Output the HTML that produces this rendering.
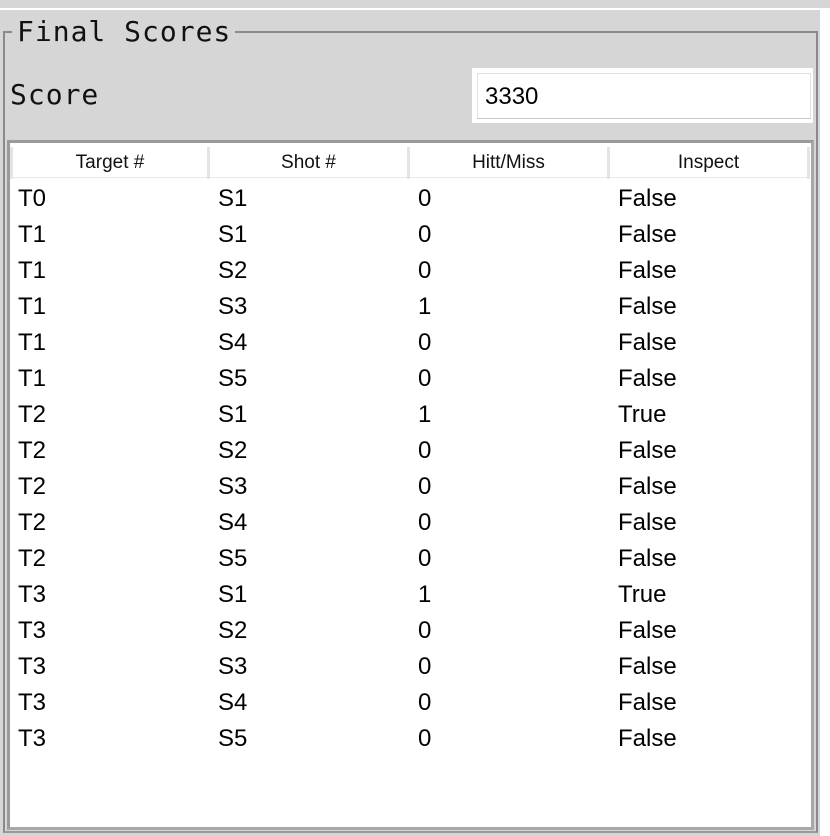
<!DOCTYPE html>
<html><head><style>
body{margin:0;width:830px;height:836px;background:#fff;position:relative;overflow:hidden;font-family:"Liberation Sans",sans-serif}
div{position:absolute;box-sizing:border-box}
.mono{font-family:"DejaVu Sans Mono","Liberation Mono",monospace;color:#111;letter-spacing:1px}
.h{top:147px;height:32px;width:200px;text-align:center;font-size:19px;line-height:32px;color:#111;border-right:3px solid #e4e4e4}
.r{font-size:24px;color:#000;line-height:36px;height:36px}
td{padding:0;height:36px}
</style></head><body>
<div style="left:0;top:0;width:830px;height:8px;background:#d6d6d6"></div>
<div style="left:0;top:10px;width:820px;height:826px;background:#d6d6d6"></div>
<div style="left:3px;top:31px;width:815px;height:802px;border:2px solid #8a8a8a;border-bottom-color:#9a9a9a"></div>
<div class="mono" style="left:12px;top:14px;padding:0 4px 0 5px;background:#d6d6d6;font-size:28px;line-height:36px">Final Scores</div>
<div class="mono" style="left:10px;top:77px;font-size:28px;line-height:36px">Score</div>
<div style="left:472px;top:68px;width:341px;height:55px;background:#fff"></div>
<div style="left:477px;top:73px;width:334px;height:46px;border:1px solid #e2e2e2;border-bottom-color:#c8c8c8;font-size:24px;line-height:46px;padding-left:7px;color:#000">3330</div>
<div style="left:7px;top:140px;width:807px;height:690px;border:3px solid #9a9a9a;border-right-color:#a8a8a8;border-bottom-color:#a8a8a8;background:#fff"></div>
<div style="left:10px;top:177px;width:800px;height:1px;background:#e8e8e8"></div>
<div class="h" style="left:10px;border-left:3px solid #e4e4e4">Target #</div>
<div class="h" style="left:210px">Shot #</div>
<div class="h" style="left:410px">Hitt/Miss</div>
<div class="h" style="left:610px">Inspect</div>
<div class="r" style="left:18px;top:181px;width:790px">
<table style="border-collapse:collapse;font-size:24px;line-height:36px"><tbody>
<tr><td style="width:200px">T0</td><td style="width:200px">S1</td><td style="width:200px">0</td><td>False</td></tr>
<tr><td>T1</td><td>S1</td><td>0</td><td>False</td></tr>
<tr><td>T1</td><td>S2</td><td>0</td><td>False</td></tr>
<tr><td>T1</td><td>S3</td><td>1</td><td>False</td></tr>
<tr><td>T1</td><td>S4</td><td>0</td><td>False</td></tr>
<tr><td>T1</td><td>S5</td><td>0</td><td>False</td></tr>
<tr><td>T2</td><td>S1</td><td>1</td><td>True</td></tr>
<tr><td>T2</td><td>S2</td><td>0</td><td>False</td></tr>
<tr><td>T2</td><td>S3</td><td>0</td><td>False</td></tr>
<tr><td>T2</td><td>S4</td><td>0</td><td>False</td></tr>
<tr><td>T2</td><td>S5</td><td>0</td><td>False</td></tr>
<tr><td>T3</td><td>S1</td><td>1</td><td>True</td></tr>
<tr><td>T3</td><td>S2</td><td>0</td><td>False</td></tr>
<tr><td>T3</td><td>S3</td><td>0</td><td>False</td></tr>
<tr><td>T3</td><td>S4</td><td>0</td><td>False</td></tr>
<tr><td>T3</td><td>S5</td><td>0</td><td>False</td></tr>
</tbody></table>
</div>
</body></html>
